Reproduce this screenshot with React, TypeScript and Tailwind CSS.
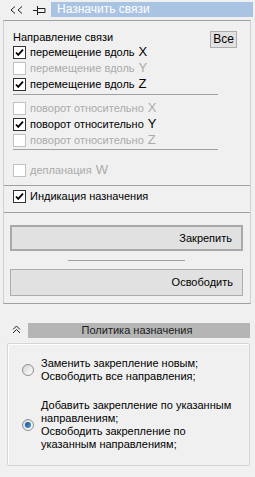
import type { ReactNode } from "react";

const FONT = { fontFamily: '"Liberation Sans", Arial, sans-serif' };

function Check({ checked, disabled }: { checked?: boolean; disabled?: boolean }) {
  return (
    <span
      className={`inline-flex h-[13px] w-[13px] shrink-0 items-center justify-center border bg-white ${
        disabled ? "border-[#c2c2c2]" : "border-[#333333]"
      }`}
    >
      {checked && (
        <svg viewBox="0 0 11 11" className="h-[11px] w-[11px]" aria-hidden>
          <path d="M2 5.5l2.2 2.4L9 2.6" fill="none" stroke="#000" strokeWidth="1.8" />
        </svg>
      )}
    </span>
  );
}

function Row({
  label,
  axis,
  checked,
  disabled,
}: {
  label: string;
  axis?: string;
  checked?: boolean;
  disabled?: boolean;
}) {
  return (
    <div className="flex h-[16px] items-center pl-[9px]">
      <Check checked={checked} disabled={disabled} />
      <span className={`ml-[4px] whitespace-nowrap leading-[16px] ${disabled ? "text-[#ababab]" : "text-black"}`}>
        {label}
        {axis && <span className="ml-[4px] text-[13px]">{axis}</span>}
      </span>
    </div>
  );
}

function Radio({ selected }: { selected?: boolean }) {
  return (
    <span className="flex h-[12px] w-[12px] shrink-0 items-center justify-center rounded-full border border-[#8f8f8f] bg-gradient-to-br from-[#d4d4d4] to-[#ffffff]">
      {selected && (
        <span className="h-[6px] w-[6px] rounded-full bg-gradient-to-br from-[#1b4f8c] to-[#4b9be0]" />
      )}
    </span>
  );
}

function Button({ children, primary }: { children: ReactNode; primary?: boolean }) {
  return (
    <div
      className={`ml-[6px] flex w-[233px] items-center justify-end bg-[#e1e1e1] pr-[9px] ${
        primary ? "h-[26px] border-2 border-[#a9a9a9]" : "h-[27px] border border-[#adadad]"
      }`}
    >
      {children}
    </div>
  );
}

export default function App() {
  return (
    <div className="relative h-[477px] w-[255px] overflow-hidden bg-[#f0f0f0] text-[11px] text-black" style={FONT}>
      {/* header */}
      <div className="flex h-[20px] items-start pt-[2px]">
        <span className="ml-[10px] mt-[4px] flex w-[13px] items-center">
          <svg viewBox="0 0 13 8" className="h-[8px] w-[13px]" aria-hidden>
            <path d="M5 0.5L1 4l4 3.5M12 0.5L8 4l4 3.5" fill="none" stroke="#202020" strokeWidth="1" />
          </svg>
        </span>
        <span className="ml-[10px] mt-[4px]">
          <svg viewBox="0 0 13 9" className="h-[9px] w-[13px]" aria-hidden>
            <path d="M0 4.5h4M4.5 0v9M4.5 2.5h7.5v4H4.5" fill="none" stroke="#202020" strokeWidth="1" />
          </svg>
        </span>
        <div className="ml-[5px] h-[15px] w-[202px] bg-[#a9c4e3] pl-[6px] text-[12px] leading-[15px] text-white">
          Назначить связи
        </div>
      </div>

      {/* main box */}
      <div className="ml-[3px] w-[248px] border border-[#a0a0a0] border-t-[#a0a0a0] border-x-[#d0d0d0] pb-[7px]">
        <div className="box-content flex h-[14px] items-start pl-[9px] pt-[9px]">
          <span className="leading-[14px]">Направление связи</span>
          <div className="ml-auto mr-[13px] mt-[1px] flex h-[17px] w-[27px] items-center justify-center border border-[#adadad] bg-[#e1e1e1] text-[12px] leading-[15px]">
            Все
          </div>
        </div>

        <Row label="перемещение вдоль" axis="X" checked />
        <Row label="перемещение вдоль" axis="Y" disabled />
        <Row label="перемещение вдоль" axis="Z" checked />
        <div className="ml-[9px] mt-[2px] h-px w-[205px] bg-[#a0a0a0]" />
        <div className="mt-[5px]">
          <Row label="поворот относительно" axis="X" disabled />
          <Row label="поворот относительно" axis="Y" checked />
          <Row label="поворот относительно" axis="Z" disabled />
        </div>
        <div className="ml-[9px] mt-[1px] h-px w-[205px] bg-[#a0a0a0]" />
        <div className="mt-[12px]">
          <Row label="депланация" axis="W" disabled />
        </div>
        <div className="mt-[7px] h-px w-full bg-[#a0a0a0]" />
        <div className="mt-[2px]">
          <Row label="Индикация назначения" checked />
        </div>
        <div className="mt-[8px] h-px w-full bg-[#a0a0a0]" />

        <div className="mt-[12px]">
          <Button primary>Закрепить</Button>
        </div>
        <div className="ml-[64px] mt-[9px] h-px w-[117px] bg-[#a0a0a0]" />
        <div className="mt-[8px]">
          <Button>Освободить</Button>
        </div>
      </div>

      {/* policy */}
      <div className="mt-[19px] flex h-[15px] items-stretch">
        <span className="ml-[12px] flex w-[16px] items-start pt-[2px]">
          <svg viewBox="0 0 9 9" className="h-[9px] w-[9px]" aria-hidden>
            <path d="M1 4.5L4.5 1 8 4.5M1 8L4.5 4.5 8 8" fill="none" stroke="#202020" strokeWidth="1" />
          </svg>
        </span>
        <div className="flex flex-1 items-center justify-center bg-[#b5b5b5] pr-[4px] leading-[15px] text-[#1a1a1a]">
          Политика назначения
        </div>
        <div className="w-[5px]" />
      </div>

      <div className="ml-[7px] mt-[5px] w-[243px] rounded-[2px] border border-[#d5d5d5] pb-[14px] pt-[13px] shadow-[inset_1px_1px_0_#ffffff]">
        <div className="flex items-center pl-[14px]">
          <Radio />
          <div className="ml-[7px] leading-[13px]">
            Заменить закрепление новым;
            <br />
            Освободить все направления;
          </div>
        </div>
        <div className="mt-[16px] flex items-center pl-[14px]">
          <Radio selected />
          <div className="ml-[7px] leading-[13px]">
            Добавить закрепление по указанным
            <br />
            направлениям;
            <br />
            Освободить закрепление по
            <br />
            указанным направлениям;
          </div>
        </div>
      </div>
    </div>
  );
}
